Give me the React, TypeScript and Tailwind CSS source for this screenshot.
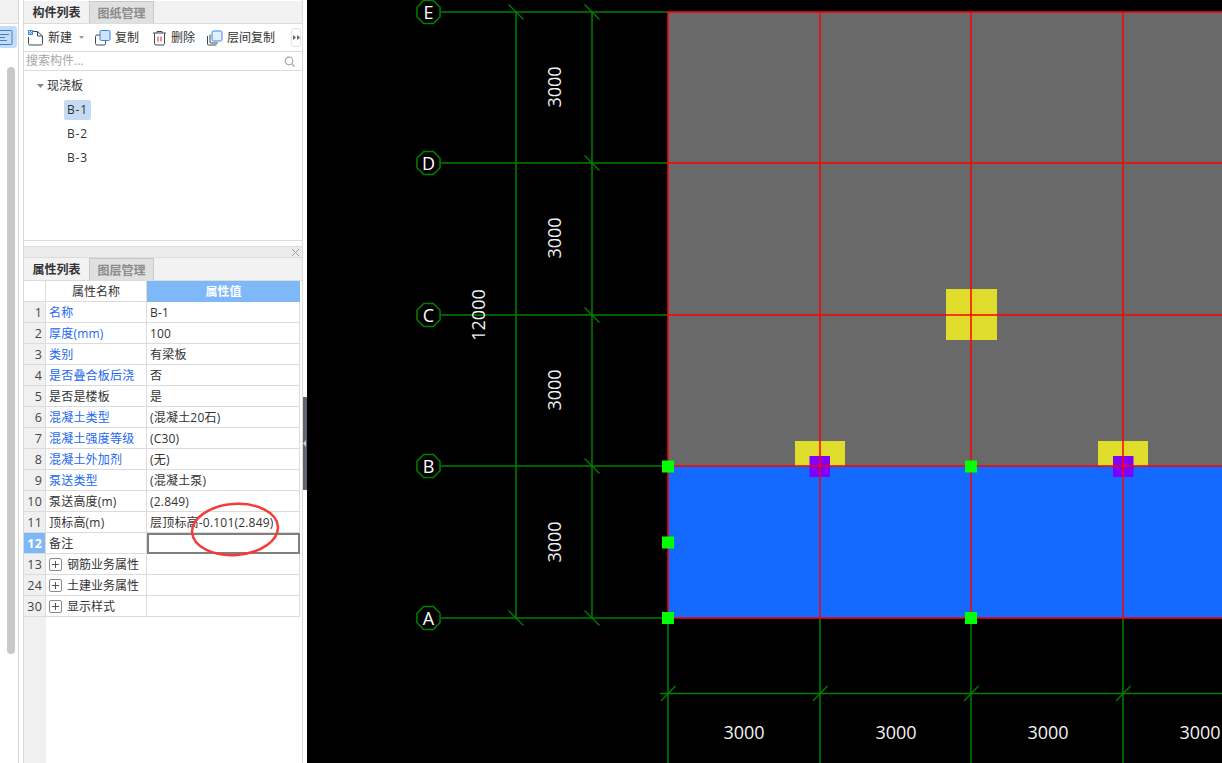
const font = { fontFamily: '"Open Sans","Noto Sans CJK SC",sans-serif' };

const rows: { n: string; name: string; value: string; blue?: boolean }[] = [
  { n: "1", name: "名称", value: "B-1", blue: true },
  { n: "2", name: "厚度(mm)", value: "100", blue: true },
  { n: "3", name: "类别", value: "有梁板", blue: true },
  { n: "4", name: "是否叠合板后浇", value: "否", blue: true },
  { n: "5", name: "是否是楼板", value: "是" },
  { n: "6", name: "混凝土类型", value: "(混凝土20石)", blue: true },
  { n: "7", name: "混凝土强度等级", value: "(C30)", blue: true },
  { n: "8", name: "混凝土外加剂", value: "(无)", blue: true },
  { n: "9", name: "泵送类型", value: "(混凝土泵)", blue: true },
  { n: "10", name: "泵送高度(m)", value: "(2.849)" },
  { n: "11", name: "顶标高(m)", value: "层顶标高-0.101(2.849)" },
];

const groups = [
  { n: "13", name: "钢筋业务属性" },
  { n: "24", name: "土建业务属性" },
  { n: "30", name: "显示样式" },
];

function Tabs({ first, second }: { first: string; second: string }) {
  return (
    <div className="flex h-[23px] shrink-0 border-b border-[#dcdcdc] bg-[#f2f2f2] text-[12px] leading-[23px]">
      <div className="w-[65px] text-center font-bold text-[#333]">{first}</div>
      <div className="w-[65px] border-x border-t border-[#c8c8c8] bg-[#e0e0e0] text-center font-bold text-[#8c8c8c]">
        {second}
      </div>
    </div>
  );
}

function NewIcon() {
  return (
    <svg width="17" height="17" viewBox="0 0 17 17" fill="none">
      <path d="M4 2.500h6.500l5 4.500v7.500a1.500 1.500 0 0 1-1.500 1.500h-11a1.500 1.500 0 0 1-1.500-1.500V8" stroke="#3d4a5c" strokeWidth="1" />
      <path d="M10.500 2.500V7h5" stroke="#3d4a5c" strokeWidth="1" />
      <rect x="1" y="1" width="5" height="5" fill="#3f8df0" />
      <path d="M2 2h1v1H2zM4 2h1v1H4zM3 3h1v1H3zM2 4h1v1H2zM4 4h1v1H4z" fill="#d6e8ff" />
    </svg>
  );
}

function CopyIcon() {
  return (
    <svg width="16" height="16" viewBox="0 0 16 16" fill="none">
      <rect x="0.500" y="5" width="10" height="10" rx="1.500" stroke="#3d4a5c" />
      <rect x="5" y="0.500" width="10" height="10" rx="1.500" fill="#cfe3fb" stroke="#2f86ee" />
    </svg>
  );
}

function TrashIcon() {
  return (
    <svg width="15" height="16" viewBox="0 0 15 16" fill="none">
      <path d="M1 3h13M5 3V1.500h5V3" stroke="#3d4a5c" />
      <path d="M2.500 3v10.500a1.500 1.500 0 0 0 1.500 1.500h7a1.500 1.500 0 0 0 1.500-1.500V3" stroke="#3d4a5c" />
      <path d="M6 6.500v5M9 6.500v5" stroke="#d92b2b" />
    </svg>
  );
}

function LayerCopyIcon() {
  return (
    <svg width="17" height="16" viewBox="0 0 17 16" fill="none">
      <path d="M1.500 6v8a1 1 0 0 0 1 1h8" stroke="#3d4a5c" />
      <path d="M4 4.500v7.500a1 1 0 0 0 1 1h7" stroke="#3d4a5c" />
      <rect x="6" y="1" width="10" height="10" rx="1.500" fill="#e4f0fd" stroke="#2f86ee" />
    </svg>
  );
}

function Toolbar() {
  return (
    <div className="flex h-[28px] shrink-0 items-center border-b border-[#dcdcdc] text-[12px] text-[#333]">
      <span className="ml-[3px] flex"><NewIcon /></span>
      <span className="ml-[4px]">新建</span>
      <svg className="ml-[7px]" width="5" height="3" viewBox="0 0 5 3"><path d="M0 0h5L2.500 3z" fill="#999" /></svg>
      <span className="ml-[11px] flex"><CopyIcon /></span>
      <span className="ml-[4px]">复制</span>
      <span className="ml-[13px] flex"><TrashIcon /></span>
      <span className="ml-[4px]">删除</span>
      <span className="ml-[11px] flex"><LayerCopyIcon /></span>
      <span className="ml-[4px]">层间复制</span>
      <div className="ml-[16px] flex h-[19px] w-[10px] items-center justify-center rounded-[3px] border border-[#e4e4e4]">
        <svg width="7" height="5" viewBox="0 0 7 5"><path d="M0 0l3 2.500L0 5zM4 0l3 2.500L4 5z" fill="#666" /></svg>
      </div>
    </div>
  );
}

function Search() {
  return (
    <div className="flex h-[19px] shrink-0 items-center justify-between border-b border-[#dcdcdc] pl-[2px] pr-[7px] text-[12px] text-[#a6a6a6]">
      <span>搜索构件...</span>
      <svg width="11" height="11" viewBox="0 0 11 11" fill="none">
        <circle cx="5" cy="5" r="3.800" stroke="#a8a8a8" strokeWidth="1.200" />
        <path d="M8 8l2.500 2.500" stroke="#a8a8a8" strokeWidth="1.200" />
      </svg>
    </div>
  );
}

function Tree() {
  return (
    <div className="h-[170px] shrink-0 border-b border-[#dcdcdc] text-[12px] text-[#333]">
      <div className="mt-[3px] flex h-[24px] items-center pl-[13px]">
        <svg width="7" height="4" viewBox="0 0 7 4"><path d="M0 0h7L3.500 4z" fill="#888" /></svg>
        <span className="ml-[3px]">现浇板</span>
      </div>
      <div className="flex h-[24px] items-center pl-[40px] tracking-[0.8px]">
        <span className="rounded-[2px] bg-[#c5daf3] px-[3px] leading-[20px]">B-1</span>
      </div>
      <div className="flex h-[24px] items-center pl-[43px] tracking-[0.8px]">B-2</div>
      <div className="flex h-[24px] items-center pl-[43px] tracking-[0.8px]">B-3</div>
    </div>
  );
}

function Row({ n, children, value, active, selected }: { n: string; children: React.ReactNode; value?: string; active?: boolean; selected?: boolean }) {
  return (
    <div className="flex h-[21px] shrink-0 text-[12px] leading-[21px] tracking-[0.2px] text-[#333]">
      <div className={`w-[22px] shrink-0 border-r border-b border-[#dcdcdc] pr-[3px] text-right text-[12.500px] ${active ? "bg-[#7eb8f8] font-bold text-white" : "bg-[#f0f0f0] text-[#444]"}`}>
        {n}
      </div>
      <div className="flex w-[101px] shrink-0 items-center whitespace-nowrap border-r border-b border-[#dcdcdc] pl-[3px]">{children}</div>
      <div className={`w-[153px] shrink-0 whitespace-nowrap pl-[3px] ${selected ? "border-2 border-[#7f7f7f]" : "border-r border-b border-[#dcdcdc]"}`}>{value}</div>
    </div>
  );
}

function PropertyTable() {
  return (
    <div className="flex min-h-0 flex-1 flex-col">
      <div className="flex h-[21px] shrink-0 text-[12px] leading-[21px]">
        <div className="w-[22px] border-r border-b border-[#dcdcdc] bg-white" />
        <div className="w-[101px] border-r border-b border-[#dcdcdc] text-center text-[#333]">属性名称</div>
        <div className="w-[153px] bg-[#7eb8f8] text-center font-bold text-white">属性值</div>
      </div>
      {rows.map((r) => (
        <Row key={r.n} n={r.n} value={r.value}>
          <span className={r.blue ? "text-[#2468f2]" : ""}>{r.name}</span>
        </Row>
      ))}
      <Row n="12" active selected>备注</Row>
      {groups.map((g) => (
        <Row key={g.n} n={g.n}>
          <span className="mr-[5px] flex h-[13px] w-[13px] items-center justify-center rounded-[2px] border border-[#8a8a8a]">
            <svg width="7" height="7" viewBox="0 0 7 7"><path d="M0 3.500h7M3.500 0v7" stroke="#555" /></svg>
          </span>
          <span className="tracking-normal">{g.name}</span>
        </Row>
      ))}
      <div className="min-h-0 flex-1">
        <div className="h-full w-[22px] bg-[#f0f0f0]" />
      </div>
    </div>
  );
}

const hLines = [12, 163, 315, 466, 618];
const vLines = [668, 820, 971, 1123];
const axes = [
  { y: 12, t: "E" },
  { y: 163, t: "D" },
  { y: 315, t: "C" },
  { y: 466, t: "B" },
  { y: 618, t: "A" },
];
const green = "#008000";

// octagon outline for the axis bubbles
function bubble(cx: number, cy: number) {
  const r = 12.500;
  return Array.from({ length: 8 }, (_, i) => {
    const a = (Math.PI / 4) * i + Math.PI / 8;
    return `${cx + r * Math.cos(a)},${cy + r * Math.sin(a)}`;
  }).join(" ");
}

function Drawing() {
  return (
    <svg className="block h-full w-full" viewBox="307 0 915 763" style={font}>
      <rect x="307" y="0" width="915" height="763" fill="#000" />

      {/* slabs */}
      <rect x="668" y="12" width="554" height="454" fill="#696969" />
      <rect x="946" y="289" width="51" height="51" fill="#dfdc2c" />
      <rect x="795" y="441" width="50" height="26" fill="#dfdc2c" />
      <rect x="1098" y="441" width="50" height="26" fill="#dfdc2c" />
      <rect x="668" y="466" width="554" height="152" fill="#1469ff" />
      <rect x="809.500" y="456" width="20.500" height="21" fill="#8000ff" />
      <rect x="1113" y="456" width="20.500" height="21" fill="#8000ff" />

      {/* axis lines */}
      <g stroke={green} strokeWidth="1.500">
        {hLines.map((y) => (
          <line key={y} x1="441" y1={y} x2="668" y2={y} />
        ))}
        <line x1="516" y1="12" x2="516" y2="618" />
        <line x1="592" y1="12" x2="592" y2="618" />
        {vLines.map((x) => (
          <line key={x} x1={x} y1="618" x2={x} y2="763" />
        ))}
        <line x1="660" y1="693.500" x2="1222" y2="693.500" />
      </g>
      <g stroke={green} strokeWidth="1.200">
        {[[516, 12], [592, 12], [592, 163], [592, 315], [592, 466], [592, 618], [516, 618]].map(([x, y]) => (
          <line key={`${x}-${y}`} x1={x - 7.500} y1={y - 7.500} x2={x + 7.500} y2={y + 7.500} />
        ))}
        {vLines.map((x) => (
          <line key={x} x1={x - 7} y1="701" x2={x + 7.500} y2="686" />
        ))}
      </g>

      {/* red outlines */}
      <g stroke="#ff0000" fill="none" strokeWidth="1.500">
        <rect x="668" y="12" width="600" height="606" />
        {vLines.slice(1).map((x) => (
          <line key={x} x1={x} y1="12" x2={x} y2="618" />
        ))}
        {hLines.slice(1, 4).map((y) => (
          <line key={y} x1="668" y1={y} x2="1222" y2={y} />
        ))}
      </g>

      {/* grips */}
      {[[668, 466.500], [971, 466.500], [668, 542.500], [668, 618], [971, 618]].map(([x, y]) => (
        <rect key={`${x}-${y}`} x={x - 6} y={y - 6} width="12" height="12" fill="#00ff00" />
      ))}

      {axes.map((a) => (
        <g key={a.t}>
          <polygon points={bubble(428.500, a.y)} fill="#000" stroke={green} strokeWidth="1.500" />
          <text x="428.500" y={a.y + 6.500} textAnchor="middle" fontSize="18" fill="#fff">{a.t}</text>
        </g>
      ))}

      <g fontSize="18" fill="#f2f2f2" textAnchor="middle">
        {[744, 896, 1048, 1200].map((x) => (
          <text key={x} x={x} y="738.500">3000</text>
        ))}
        {[87, 238, 390, 542].map((y) => (
          <text key={y} transform={`translate(561 ${y}) rotate(-90)`}>3000</text>
        ))}
        <text transform="translate(485 315) rotate(-90)">12000</text>
      </g>
    </svg>
  );
}

export default function App() {
  return (
    <div className="relative flex h-[763px] w-[1222px] overflow-hidden bg-white" style={font}>
      {/* left rail */}
      <div className="flex w-[19px] shrink-0 flex-col border-r border-[#d8d8d8]">
        <div className="h-[24px] shrink-0 border-b border-[#dcdcdc] bg-[#f2f2f2]" />
        <div className="mt-[2px] flex h-[22px] w-[17px] items-center rounded-r-[3px] bg-[#c5dcf5]">
          <svg width="13" height="15" viewBox="0 0 13 15" fill="none">
            <rect x="-3" y="0.500" width="15" height="14" rx="1" stroke="#3f7fcf" />
            <path d="M0 4.500h9M0 7.500h5M0 10.500h7" stroke="#3f7fcf" />
          </svg>
        </div>
        <div className="ml-[7px] mt-[19px] h-[587px] w-[8px] rounded-[4px] bg-[#c9c9c9]" />
      </div>

      <div className="w-[4px] shrink-0" />

      {/* component panels */}
      <div className="flex w-[280px] shrink-0 flex-col border-x border-[#dcdcdc] pt-[1px]">
        <Tabs first="构件列表" second="图纸管理" />
        <Toolbar />
        <Search />
        <Tree />
        <div className="h-[5px] shrink-0" />
        <div className="flex h-[12px] shrink-0 items-center justify-end border-y border-[#dcdcdc] bg-[#ececec] pr-[3px]">
          <svg width="7" height="7" viewBox="0 0 7 7"><path d="M0 0l7 7M7 0L0 7" stroke="#a0a0a0" /></svg>
        </div>
        <Tabs first="属性列表" second="图层管理" />
        <PropertyTable />
      </div>

      {/* splitter */}
      <div className="relative w-[4px] shrink-0">
        <div className="absolute left-0 top-[397px] flex h-[93px] w-[4px] items-center bg-[#5f6670]">
          <svg width="4" height="7" viewBox="0 0 4 7"><path d="M3 0v7L0 3.500z" fill="#c9ccd0" /></svg>
        </div>
      </div>

      {/* drawing area */}
      <div className="min-w-0 flex-1">
        <Drawing />
      </div>

      {/* hand-drawn annotation */}
      <svg className="pointer-events-none absolute left-[185px] top-[495px]" width="100" height="70" viewBox="185 495 100 70" fill="none">
        <ellipse cx="235" cy="529.500" rx="43" ry="25.500" transform="rotate(-4 235 529.500)" stroke="#f43c3c" strokeWidth="2.500" />
      </svg>
    </div>
  );
}
